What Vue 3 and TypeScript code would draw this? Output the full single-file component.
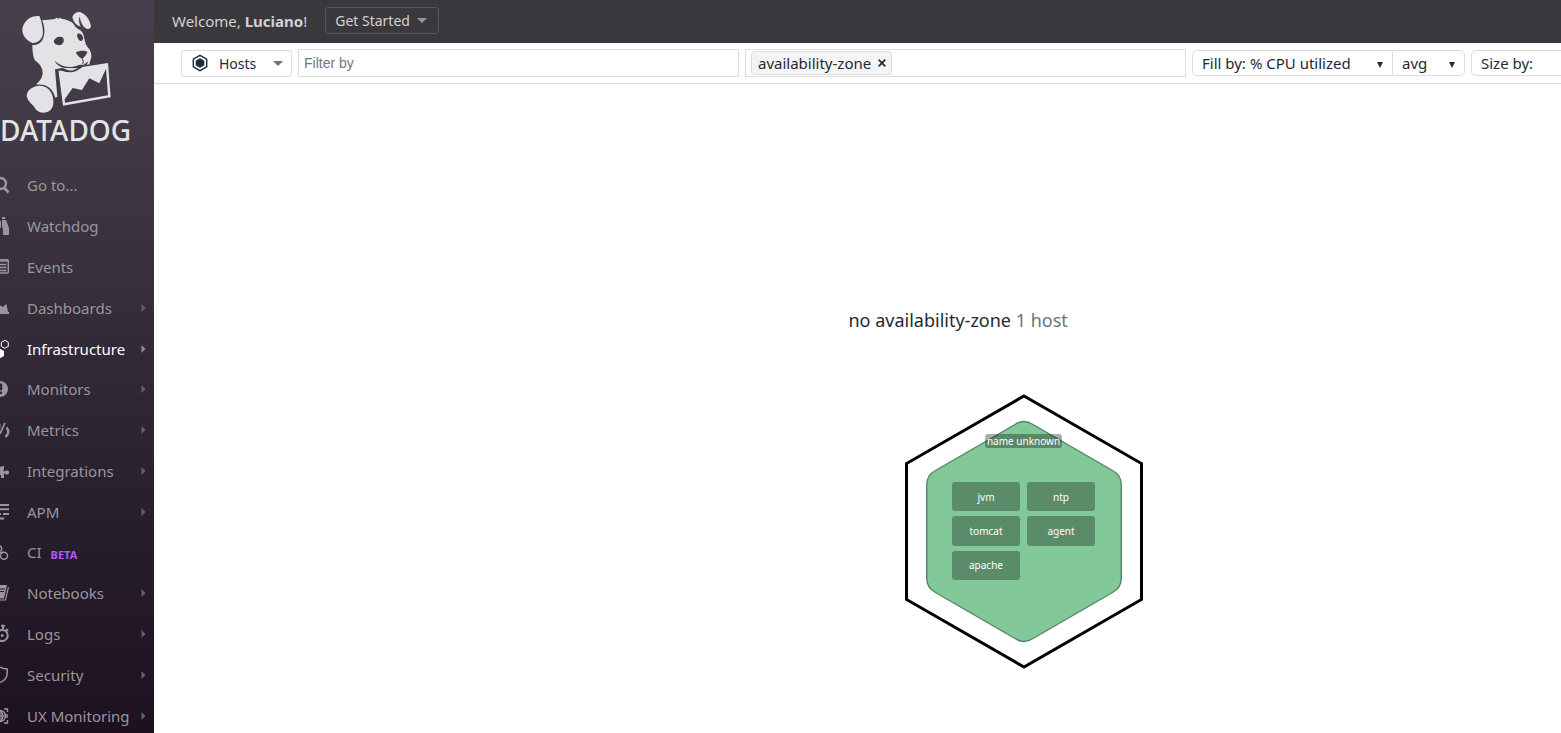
<script setup lang="ts">
import { ref } from 'vue'

interface NavItem {
  label: string
  icon: string
  menu?: boolean
  active?: boolean
  badge?: string
}

const navItems: NavItem[] = [
  { label: 'Go to...', icon: 'search' },
  { label: 'Watchdog', icon: 'binoculars' },
  { label: 'Events', icon: 'events' },
  { label: 'Dashboards', icon: 'dashboards', menu: true },
  { label: 'Infrastructure', icon: 'infrastructure', menu: true, active: true },
  { label: 'Monitors', icon: 'monitors', menu: true },
  { label: 'Metrics', icon: 'metrics', menu: true },
  { label: 'Integrations', icon: 'integrations', menu: true },
  { label: 'APM', icon: 'apm', menu: true },
  { label: 'CI', icon: 'ci', badge: 'BETA' },
  { label: 'Notebooks', icon: 'notebooks', menu: true },
  { label: 'Logs', icon: 'logs', menu: true },
  { label: 'Security', icon: 'security', menu: true },
  { label: 'UX Monitoring', icon: 'ux', menu: true },
]

const apps = ['jvm', 'ntp', 'tomcat', 'agent', 'apache']

const filter = ref('')
const groups = ref(['availability-zone'])
const metric = ref('% CPU utilized')
const aggregate = ref('avg')

function removeGroup(name: string) {
  groups.value = groups.value.filter((g) => g !== name)
}
</script>

<template>
  <div class="page">
    <aside class="sidebar">
      <a class="brand" href="#">
        <svg class="dog" viewBox="0 0 450 345" aria-hidden="true">
          <g fill="#e3e2e4">
            <path d="M118 48C106 47 92 50 82 59C72 68 66 80 67 92C68 108 82 123 98 129C112 130 124 120 128 106C131 88 125 64 118 48Z" />
            <path d="M126 61C139 60 152 59 164 57L170 53L175 56L180 53L186 57C196 57 206 62 214 66C221 69 224 80 233 86C244 91 248 96 251 106C254 119 255 131 262 140C271 149 275 159 274 171L268 193L260 195L265 184L250 195C239 191 228 201 207 201C190 200 174 191 163 182C171 195 182 202 194 204L239 205L230 212C214 218 200 208 187 205L165 208L172 290L166 293C158 265 141 251 108 254C121 242 131 229 127 211C125 198 116 190 104 180C97 165 98 151 97 135C112 137 127 127 131 110C136 95 133 75 126 61Z" />
            <path d="M217 51C221 39 230 35 240 36C258 42 270 60 273 79C272 86 264 89 257 85C248 79 242 68 239 50C235 57 237 70 242 80C230 76 221 68 217 51Z" />
            <path d="M112 258C92 262 80 273 80 289C84 307 100 314 106 326C116 340 134 341 147 334C160 325 162 309 159 294C155 270 137 254 112 258Z" />
          </g>
          <g fill="#423b48">
            <path d="M161 124C164 112 178 107 188 112C194 119 191 131 184 134C175 137 164 136 161 124Z" />
            <path d="M232 102C238 98 247 104 249 112C250 120 246 125 240 122C234 119 230 109 232 102Z" />
            <path d="M228 157C238 152 253 151 262 155C260 164 252 174 245 175C238 174 230 164 228 157Z" />
          </g>
          <path d="M245 173L250 184L248 192" fill="none" stroke="#423b48" stroke-width="3" />
          <path d="M175 211C192 214 209 220 230 212L246 201L324 189L332 292L189 317Z" fill="#e3e2e4" />
          <path d="M194 298L218 264L246 270L268 235L298 250L318 206L324 286L195 308Z" fill="#423b48" />
          <path d="M170 210L187 207C202 219 224 216 245 200" fill="none" stroke="#423b48" stroke-width="5" />
          <path d="M172 208L186 318" stroke="#423b48" stroke-width="3" />
        </svg>
        <span class="wordmark">DATADOG</span>
      </a>

      <nav class="nav" aria-label="Main">
        <a
          v-for="item in navItems"
          :key="item.label"
          href="#"
          class="nav-item"
          :class="{ active: item.active }"
        >
          <svg class="nav-icon" viewBox="0 0 10 20" aria-hidden="true" fill="none" stroke="currentColor">
            <template v-if="item.icon === 'search'">
              <circle cx="0.5" cy="8.5" r="5.5" stroke-width="2.4" />
              <path d="M4 12.500L8.500 17.500" stroke-width="2.8" />
            </template>
            <g v-else-if="item.icon === 'binoculars'" fill="currentColor" stroke="none">
              <path d="M2 1H5.200V3H2ZM2 4H6L9 12V19H3V14L2 10ZM-1 5H1V12H-1Z" />
            </g>
            <template v-else-if="item.icon === 'events'">
              <rect x="-6" y="2.700" width="14.300" height="13.300" rx="1" stroke-width="1.400" />
              <path d="M-4 4H8M-3 7.500H6.500M-3 10.500H6.500M-3 13.500H6.500" stroke-width="1.500" />
            </template>
            <path
              v-else-if="item.icon === 'dashboards'"
              d="M-2 7L0 7L2.500 9L6.500 6L8 14H9V16H-2Z"
              fill="currentColor"
              stroke="none"
            />
            <template v-else-if="item.icon === 'infrastructure'">
              <path d="M4.800 1.300L8.300 3.300V7.300L4.800 9.300L1.300 7.300V3.300Z" stroke-width="1" />
              <path d="M-0.500 9.500L4 12V17L-0.500 19.500Z" fill="currentColor" stroke="none" />
            </template>
            <path
              v-else-if="item.icon === 'monitors'"
              d="M0 2A8 8 0 0 1 0 18V15H2V12.500H0V11.200H2.200V4.500H0Z"
              fill="currentColor"
              stroke="none"
            />
            <template v-else-if="item.icon === 'metrics'">
              <path d="M4.800 3L0 14" stroke-width="1.800" />
              <path d="M0 4V8" stroke-width="1" />
              <path d="M6.500 7.500C9.200 10.500 8.800 14.500 5.500 17" stroke-width="2.400" />
            </template>
            <path
              v-else-if="item.icon === 'integrations'"
              d="M-2 6L1 5.500L4 5V8.500C3 10 4 11 5.500 10C6.500 8.800 9 9 9 11.500C9 14 6.500 14 5.500 13C4 12 3.500 13 4 14V17H1V14H0V17H-2Z"
              fill="currentColor"
              stroke="none"
            />
            <path
              v-else-if="item.icon === 'apm'"
              d="M0 3H9M0 7.300H9M0 12H1M3 12H9M0 16.500H4.200"
              stroke-width="2"
            />
            <template v-else-if="item.icon === 'ci'">
              <circle cx="4" cy="13.800" r="3.500" stroke-width="1.500" />
              <path d="M0 4C2.500 5 2 8 0.500 9.500M0 10.500H4" stroke-width="1.500" />
            </template>
            <template v-else-if="item.icon === 'notebooks'">
              <path d="M-2 2H7L4 15.500H-2Z" fill="currentColor" stroke="none" />
              <path d="M8.500 4L5.500 17H0" stroke-width="1.200" />
              <path d="M0 6H4.800M0 8.500H4" stroke="#251a2a" stroke-width="1" />
            </template>
            <template v-else-if="item.icon === 'logs'">
              <circle cx="2.200" cy="11.500" r="5.500" stroke-width="2" />
              <circle cx="2.200" cy="11.500" r="1.500" fill="currentColor" stroke="none" />
              <path d="M1 1.800H5M3 1.800V5M6 5L8 7" stroke-width="2" />
            </template>
            <path
              v-else-if="item.icon === 'security'"
              d="M0 2.200C2 3.500 4.500 4 7.200 4V8C7.200 13 4 16 0 17.500"
              stroke-width="1.500"
            />
            <template v-else>
              <circle cx="0" cy="10" r="5.500" stroke-width="1.400" />
              <path d="M0 5C4 7 4 13 0 15M0 10H6M1 4V16" stroke-width="1.200" />
              <path d="M4 3H7.500V6M7 8V12M7.500 14V17H4" stroke-width="1.400" />
            </template>
          </svg>
          <span class="nav-label">{{ item.label }}</span>
          <span v-if="item.badge" class="badge">{{ item.badge }}</span>
          <svg v-if="item.menu" class="nav-caret" viewBox="0 0 5 8" aria-hidden="true">
            <path d="M0.500 0L4.500 4L0.500 8Z" fill="currentColor" />
          </svg>
        </a>
      </nav>
    </aside>

    <div class="content">
      <header class="topbar">
        <span>Welcome, <strong>Luciano</strong>!</span>
        <button type="button" class="get-started">
          Get Started
          <svg class="caret" viewBox="0 0 10 5" aria-hidden="true"><path d="M0 0H10L5 5Z" fill="currentColor" /></svg>
        </button>
      </header>

      <div class="toolbar">
        <button type="button" class="hosts">
          <svg class="hex-icon" viewBox="0 0 16 18" aria-hidden="true">
            <path d="M8 1.300L14.700 5.100V12.900L8 16.700L1.300 12.900V5.100Z" fill="none" stroke="#1c2b34" stroke-width="1.400" />
            <path d="M8 4.500L12 6.700V11.300L8 13.500L4 11.300V6.700Z" fill="#1c2b34" stroke="#1c2b34" stroke-width="0.600" />
          </svg>
          <span>Hosts</span>
          <svg class="caret" viewBox="0 0 10 5" aria-hidden="true"><path d="M0 0H10L5 5Z" fill="currentColor" /></svg>
        </button>

        <input v-model="filter" class="filter" type="text" placeholder="Filter by" aria-label="Filter by" />

        <div class="group-box">
          <span v-for="g in groups" :key="g" class="tag">
            {{ g }}
            <button type="button" class="remove" :aria-label="`Remove ${g}`" @click="removeGroup(g)">
              <svg viewBox="0 0 8 8" aria-hidden="true"><path d="M0.700 0.700L7.300 7.300M7.300 0.700L0.700 7.300" stroke="currentColor" stroke-width="1.700" /></svg>
            </button>
          </span>
          <input class="group-input" type="text" aria-label="Group by" />
        </div>

        <div class="fill">
          <label class="fill-metric">
            <span>Fill by:</span>
            <select v-model="metric">
              <option>% CPU utilized</option>
            </select>
            <svg class="arrow" viewBox="0 0 6 6" aria-hidden="true"><path d="M0 0H6L3 6Z" fill="currentColor" /></svg>
          </label>
          <label class="fill-agg">
            <select v-model="aggregate" aria-label="Aggregate">
              <option>avg</option>
            </select>
            <svg class="arrow" viewBox="0 0 6 6" aria-hidden="true"><path d="M0 0H6L3 6Z" fill="currentColor" /></svg>
          </label>
        </div>

        <div class="size">Size by:</div>
      </div>

      <main class="map">
        <h2 class="group-title">no availability-zone <span>1 host</span></h2>
        <section class="host" aria-label="name unknown">
          <svg class="host-shape" viewBox="0 0 240 276" aria-hidden="true">
            <path d="M120 3L237.500 70.500V206.500L120 274L2.500 206.500V70.500Z" fill="none" stroke="#000" stroke-width="3" />
            <path
              d="M111 31.500Q120 25.500 129 31.500L208.500 77.500Q217.300 82 217.300 92V185Q217.300 195 208.500 199.500L129 245.500Q120 251.500 111 245.500L31.500 199.500Q22.700 195 22.700 185V92Q22.700 82 31.500 77.500Z"
              fill="#83c898"
              stroke="#568665"
              stroke-width="1.400"
            />
          </svg>
          <span class="host-name">name unknown</span>
          <div class="apps">
            <button v-for="app in apps" :key="app" type="button" class="app">{{ app }}</button>
          </div>
        </section>
      </main>
    </div>
  </div>
</template>

<style>
body {
  margin: 0;
}
</style>

<style scoped>
.page {
  display: flex;
  height: 100vh;
  overflow: hidden;
  background: #fff;
  color: #1c2b34;
  font-family: 'Noto Sans', sans-serif;
  font-size: 15px;
}

.page *,
.page {
  box-sizing: border-box;
}

button,
input,
select {
  font: inherit;
  color: inherit;
  margin: 0;
}

button {
  cursor: pointer;
}

/* Sidebar */
.sidebar {
  display: flex;
  flex-direction: column;
  flex: 0 0 154px;
  min-width: 0;
  background: linear-gradient(#463f4c 0, #3f3844 160px, #332b38 330px, #251c2a 560px, #1d1120 100%);
}

.brand {
  display: block;
  flex: 0 0 165px;
  color: #e3e2e4;
  text-decoration: none;
}

.dog {
  display: block;
  width: 150px;
  height: 115px;
}

.wordmark {
  display: block;
  font-size: 28px;
  font-weight: 500;
  line-height: 30px;
}

.nav {
  display: grid;
  grid-auto-rows: 1fr;
  flex: 1 0 auto;
  min-height: 571px;
}

.nav-item {
  display: flex;
  align-items: center;
  padding-right: 8px;
  color: #9b969e;
  text-decoration: none;
}

.nav-item.active {
  color: #fff;
}

.nav-icon {
  width: 10px;
  height: 20px;
  margin-right: 17px;
}

.badge {
  margin: 4px 0 0 9px;
  color: #b856f7;
  font-size: 11px;
  font-weight: 700;
}

.nav-caret {
  width: 5px;
  height: 8px;
  margin-left: auto;
  color: #67606b;
}

.active .nav-caret {
  color: #918b95;
}

/* Top bar */
.content {
  display: flex;
  flex-direction: column;
  flex: 1;
  min-width: 0;
}

.topbar {
  display: flex;
  align-items: center;
  gap: 18px;
  flex: 0 0 43px;
  padding: 0 18px 2px;
  background: #3b383d;
  color: #d2d1d3;
}

.get-started {
  display: flex;
  align-items: center;
  gap: 7px;
  height: 27px;
  padding: 0 11px 0 9px;
  border: 1px solid #57545a;
  border-radius: 3px;
  background: transparent;
  font-size: 14px;
}

.caret {
  width: 10px;
  height: 5px;
  color: #98969a;
}

/* Toolbar */
.toolbar {
  display: flex;
  align-items: center;
  gap: 6px;
  flex: 0 0 41px;
  padding-left: 27px;
  border-bottom: 1px solid #dcdde0;
}

.hosts {
  display: flex;
  align-items: center;
  width: 111px;
  height: 27px;
  padding: 0 8px 0 10px;
  border: 1px solid #dcdde0;
  border-radius: 3px;
  background: #fff;
  font-size: 14px;
}

.hosts .caret {
  margin-left: auto;
  color: #69747b;
}

.hex-icon {
  width: 16px;
  height: 18px;
  margin-right: 11px;
}

.filter,
.group-box {
  flex: 1 1 200px;
  min-width: 0;
  height: 28px;
  border: 1px solid #dcdde0;
  border-radius: 0;
  background: #fff;
}

.filter {
  padding: 0 5px;
  font-family: 'Liberation Sans', Arial, sans-serif;
  font-size: 14px;
}

.filter::placeholder {
  color: #75787c;
  opacity: 1;
}

.group-box {
  display: flex;
  align-items: center;
  padding-left: 5px;
}

.tag {
  display: flex;
  align-items: center;
  gap: 7px;
  height: 24px;
  padding: 0 5px 0 6px;
  border: 1px solid #dcdde0;
  border-radius: 4px;
  background: #f4f4f5;
  white-space: nowrap;
}

.remove {
  display: flex;
  padding: 0;
  border: 0;
  background: none;
}

.remove svg {
  width: 8px;
  height: 8px;
}

.group-input {
  flex: 1;
  min-width: 0;
  border: 0;
  outline: 0;
  background: none;
}

.fill {
  display: flex;
  height: 26px;
  border: 1px solid #dcdde0;
  border-radius: 5px;
}

.fill-metric,
.fill-agg {
  display: flex;
  align-items: center;
  padding: 0 9px;
}

.fill-metric {
  gap: 4px;
  width: 200px;
  border-right: 1px solid #dcdde0;
}

.fill-agg {
  width: 71px;
}

.fill select {
  flex: 1;
  min-width: 0;
  padding: 0;
  border: 0;
  outline: 0;
  appearance: none;
  background: none;
}

.arrow {
  flex: none;
  width: 6px;
  height: 6px;
  margin-top: 4px;
}

.size {
  flex: 0 0 90px;
  height: 26px;
  padding-left: 9px;
  border: 1px solid #dcdde0;
  border-right: 0;
  border-radius: 5px 0 0 5px;
  line-height: 24px;
}

/* Host map: a free canvas holding the group title and its host */
.map {
  position: relative;
  flex: 1;
  min-height: 0;
}

.group-title {
  position: absolute;
  top: 224px;
  left: calc(50% - 9px);
  margin: 0;
  font-size: 18px;
  font-weight: 400;
  line-height: 25px;
  white-space: nowrap;
}

.group-title span {
  color: #69757c;
}

.host {
  position: absolute;
  top: 309px;
  left: calc(50% + 46px);
  display: flex;
  flex-direction: column;
  align-items: center;
  width: 240px;
  height: 276px;
  padding-top: 41px;
  color: #fff;
  font-size: 10px;
}

.host-shape {
  position: absolute;
  inset: 0;
  width: 100%;
  height: 100%;
}

.host-name {
  position: relative;
  padding: 0 2px;
  border-radius: 3px;
  background: rgba(0, 0, 0, 0.32);
  line-height: 14px;
}

.apps {
  position: relative;
  display: grid;
  grid-template-columns: 68px 68px;
  grid-template-rows: 1fr 1fr 1fr;
  gap: 5px 7px;
  height: 98px;
  margin-top: 34px;
}

.app {
  padding: 0;
  border: 0;
  border-radius: 3px;
  background: #5a8c69;
  color: #fff;
}
</style>
